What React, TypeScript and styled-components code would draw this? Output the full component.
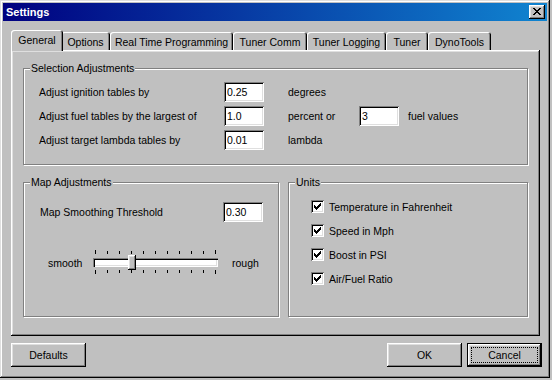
import React from "react";
import styled, { createGlobalStyle, css } from "styled-components";

const FACE = "#c0c0c0";
const LIGHT = "#dfdfdf";
const SHADOW = "#808080";

const GlobalStyle = createGlobalStyle`
  html, body { margin: 0; padding: 0; background: #c0c0c0; }
  body { font-family: "Liberation Sans", Arial, sans-serif; font-size: 10.5px; color: #000; }
  * { box-sizing: border-box; }
`;

const raised = css`
  box-shadow: inset -1px -1px 0 #000, inset 1px 1px 0 #fff, inset -2px -2px 0 ${SHADOW}, inset 2px 2px 0 ${LIGHT};
`;

const sunken = css`
  box-shadow: inset 1px 1px 0 ${SHADOW}, inset -1px -1px 0 #fff, inset 2px 2px 0 #000, inset -2px -2px 0 ${LIGHT};
`;

// tiny pixel-art helper for the classic glyphs
const pix = (rows: string[]) =>
  rows
    .flatMap((r, y) => [...r].map((c, x) => (c === "#" ? `M${x} ${y}h1v1h-1z` : "")))
    .join("");

const CLOSE = pix(["##....##", ".##..##.", "..####..", "...##...", "..####..", ".##..##.", "##....##"]);
const CHECK = pix(["......#", ".....##", "#...###", "##.###.", "#####..", ".###...", "..#...."]);

const Window = styled.div`
  width: 550px;
  height: 378px;
  padding: 3px;
  background: ${FACE};
  box-shadow: inset -1px -1px 0 #000, inset 1px 1px 0 ${LIGHT}, inset -2px -2px 0 ${SHADOW}, inset 2px 2px 0 #fff;
  display: flex;
  flex-direction: column;
`;

const TitleBar = styled.div`
  height: 18px;
  display: flex;
  align-items: center;
  justify-content: space-between;
  padding: 0 2px 0 3px;
  background: linear-gradient(90deg, #000080, #1084d0);
  color: #fff;
  font-weight: bold;
  font-size: 11px;
`;

const CloseButton = styled.div`
  width: 16px;
  height: 14px;
  background: ${FACE};
  ${raised};
  display: flex;
  align-items: center;
  justify-content: center;
  padding: 0 1px 1px 0;
`;

const Body = styled.div`
  padding: 9px 5px 0 8px;
  display: flex;
  flex-direction: column;
`;

const TabRow = styled.div`
  display: flex;
  align-items: flex-end;
  height: 20px;
  padding-left: 2px;
`;

const Tab = styled.div<{ $w: number; $active?: boolean }>`
  width: ${(p) => (p.$active ? p.$w + 4 : p.$w)}px;
  height: ${(p) => (p.$active ? 21 : 18)}px;
  display: flex;
  align-items: center;
  justify-content: center;
  white-space: nowrap;
  background: ${FACE};
  border-radius: 3px 3px 0 0;
  box-shadow: inset 1px 1px 0 #fff, inset -1px 0 0 #000, inset -2px 0 0 ${SHADOW};
  ${(p) =>
    p.$active
      ? css`
          position: relative;
          z-index: 1;
          margin: 0 -2px -1px;
          padding-bottom: 1px;
        `
      : css`
          padding-top: 1px;
        `}
`;

const Panel = styled.div`
  width: 529px;
  height: 286px;
  padding: 18px 12px 0 12px;
  background: ${FACE};
  box-shadow: inset -1px -1px 0 #000, inset 1px 1px 0 #fff, inset -2px -2px 0 ${SHADOW}, inset 2px 2px 0 ${LIGHT};
  display: flex;
  flex-direction: column;
`;

const Group = styled.div<{ $h: number }>`
  height: ${(p) => p.$h}px;
  border: 1px solid ${SHADOW};
  box-shadow: 1px 1px 0 #fff, inset 1px 1px 0 #fff;
  display: flex;
  flex-direction: column;
`;

const Caption = styled.div`
  align-self: flex-start;
  margin: -7px 0 0 6px;
  padding: 0 1px;
  line-height: 13px;
  background: ${FACE};
`;

const Lower = styled.div`
  margin-top: 17px;
  display: grid;
  grid-template-columns: 256px 240px;
  column-gap: 9px;
`;

const AdjustGrid = styled.div`
  margin-top: 7px;
  padding-left: 15px;
  display: grid;
  grid-template-columns: 185px 64px 71px 49px auto;
  grid-auto-rows: 20px;
  row-gap: 4px;
  align-items: center;
`;

const Field = styled.input`
  width: 40px;
  height: 20px;
  border: 0;
  outline: none;
  padding: 0 0 0 3px;
  background: #fff;
  font: inherit;
  color: #000;
  ${sunken};
`;

const ThresholdRow = styled.div`
  margin-top: 13px;
  padding-left: 16px;
  height: 20px;
  display: grid;
  grid-template-columns: 183px 40px;
  align-items: center;
`;

const SliderRow = styled.div`
  margin-top: 28px;
  padding-left: 24px;
  display: flex;
  align-items: center;
`;

const SliderLabel = styled.span<{ $w?: number }>`
  width: ${(p) => (p.$w ? `${p.$w}px` : "auto")};
  margin-left: ${(p) => (p.$w ? 0 : 14)}px;
  padding-top: 1px;
`;

const Slider = styled.div`
  width: 125px;
  display: flex;
  flex-direction: column;
`;

const TrackArea = styled.div`
  position: relative;
  height: 16px;
  padding-top: 4px;
`;

const Track = styled.div`
  height: 9px;
  background: #fff;
  box-shadow: inset 1px 1px 0 ${SHADOW}, inset 2px 2px 0 #000, inset -1px -1px 0 #fff, inset -2px -2px 0 ${LIGHT};
`;

const Thumb = styled.div`
  position: absolute;
  top: 1px;
  width: 8px;
  height: 15px;
  background: ${FACE};
  ${raised};
`;

const UnitList = styled.div`
  margin-top: 11px;
  padding-left: 22px;
  display: flex;
  flex-direction: column;
  gap: 11px;
`;

const CheckRow = styled.label`
  height: 13px;
  display: flex;
  align-items: center;
  gap: 5px;
`;

const CheckBox = styled.span`
  width: 13px;
  height: 13px;
  flex: none;
  background: #fff;
  ${sunken};
  display: flex;
  padding: 3px;
`;

const ButtonRow = styled.div`
  margin-top: 7px;
  display: flex;
  gap: 5px;
`;

const Spacer = styled.div`
  flex: 1;
`;

const Button = styled.div<{ $default?: boolean }>`
  width: 75px;
  height: 24px;
  padding: 4px;
  background: ${FACE};
  display: flex;
  ${(p) =>
    p.$default
      ? css`
          box-shadow: inset 0 0 0 1px #000, inset -2px -2px 0 #000, inset 2px 2px 0 #fff, inset -3px -3px 0 ${SHADOW},
            inset 3px 3px 0 ${LIGHT};
        `
      : raised};
`;

const ButtonFace = styled.span<{ $focus?: boolean }>`
  flex: 1;
  display: flex;
  align-items: center;
  justify-content: center;
  border: 1px ${(p) => (p.$focus ? "dotted #000" : "solid transparent")};
`;

const Ticks = ({ down }: { down?: boolean }) => (
  <svg width="125" height="4" style={{ display: "block" }} shapeRendering="crispEdges">
    {Array.from({ length: 11 }, (_, i) => {
      const end = i === 0 || i === 10;
      const y = down ? 0 : end ? 0 : 1;
      return <rect key={i} x={2 + i * 12} y={y} width="1" height={end ? 4 : 3} fill="#000" />;
    })}
  </svg>
);

const tabs = [
  { label: "General", w: 48 },
  { label: "Options", w: 49 },
  { label: "Real Time Programming", w: 123 },
  { label: "Tuner Comm", w: 74 },
  { label: "Tuner Logging", w: 79 },
  { label: "Tuner", w: 42 },
  { label: "DynoTools", w: 63 },
];

const units = ["Temperature in Fahrenheit", "Speed in Mph", "Boost in PSI", "Air/Fuel Ratio"];

export default function App() {
  const smoothing = 3;
  return (
    <>
      <GlobalStyle />
      <Window>
        <TitleBar>
          <span>Settings</span>
          <CloseButton>
            <svg width="8" height="7" shapeRendering="crispEdges">
              <path d={CLOSE} fill="#000" />
            </svg>
          </CloseButton>
        </TitleBar>
        <Body>
          <TabRow>
            {tabs.map((t, i) => (
              <Tab key={t.label} $w={t.w} $active={i === 0}>
                {t.label}
              </Tab>
            ))}
          </TabRow>
          <Panel>
            <Group $h={97}>
              <Caption>Selection Adjustments</Caption>
              <AdjustGrid>
                <span>Adjust ignition tables by</span>
                <Field readOnly value="0.25" />
                <span>degrees</span>
                <span />
                <span />
                <span>Adjust fuel tables by the largest of</span>
                <Field readOnly value="1.0" />
                <span>percent or</span>
                <Field readOnly value="3" />
                <span>fuel values</span>
                <span>Adjust target lambda tables by</span>
                <Field readOnly value="0.01" />
                <span>lambda</span>
                <span />
                <span />
              </AdjustGrid>
            </Group>
            <Lower>
              <Group $h={135}>
                <Caption>Map Adjustments</Caption>
                <ThresholdRow>
                  <span>Map Smoothing Threshold</span>
                  <Field readOnly value="0.30" />
                </ThresholdRow>
                <SliderRow>
                  <SliderLabel $w={45}>smooth</SliderLabel>
                  <Slider>
                    <Ticks />
                    <TrackArea>
                      <Track />
                      <Thumb style={{ left: 2 + smoothing * 12 - 3 }} />
                    </TrackArea>
                    <Ticks down />
                  </Slider>
                  <SliderLabel>rough</SliderLabel>
                </SliderRow>
              </Group>
              <Group $h={135}>
                <Caption>Units</Caption>
                <UnitList>
                  {units.map((u) => (
                    <CheckRow key={u}>
                      <CheckBox>
                        <svg width="7" height="7" shapeRendering="crispEdges">
                          <path d={CHECK} fill="#000" />
                        </svg>
                      </CheckBox>
                      <span>{u}</span>
                    </CheckRow>
                  ))}
                </UnitList>
              </Group>
            </Lower>
          </Panel>
          <ButtonRow>
            <Button>
              <ButtonFace>Defaults</ButtonFace>
            </Button>
            <Spacer />
            <Button>
              <ButtonFace>OK</ButtonFace>
            </Button>
            <Button $default>
              <ButtonFace $focus>Cancel</ButtonFace>
            </Button>
          </ButtonRow>
        </Body>
      </Window>
    </>
  );
}
